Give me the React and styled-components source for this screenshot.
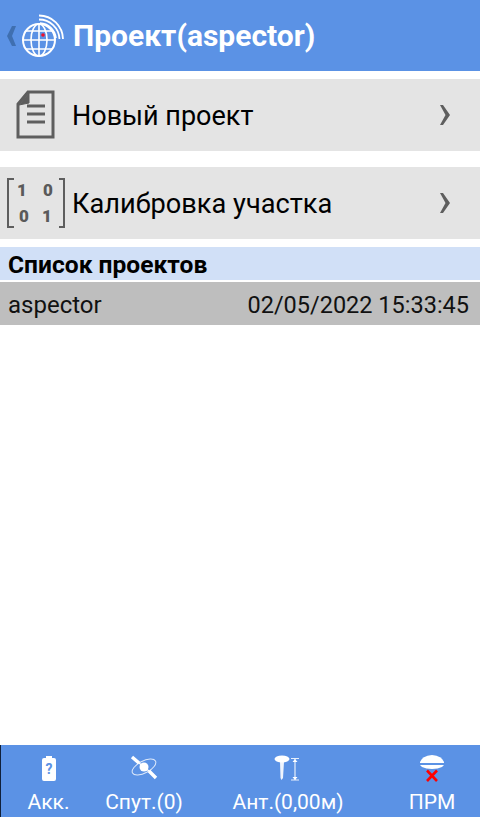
import React from "react";
import styled, { createGlobalStyle } from "styled-components";

const GlobalStyle = createGlobalStyle`
  html, body {
    margin: 0;
    padding: 0;
    background: #fff;
    font-family: Roboto, "Noto Sans", sans-serif;
  }
`;

const BackIcon = () => (
  <svg width="11" height="22" viewBox="0 0 11 22">
    <path d="M6 1 L1 11 L6 21 L10 21 L6 11 L10 1 Z" fill="#3f6fb0" />
  </svg>
);

const GlobeIcon = () => (
  <svg width="54" height="44" viewBox="0 0 54 44" fill="none" stroke="#fff">
    <circle cx="20" cy="26" r="16" strokeWidth="2" />
    <ellipse cx="20" cy="26" rx="8" ry="16" strokeWidth="1.6" />
    <path d="M20 10 V42 M4 26 H36 M7 17 H33 M7 35 H33" strokeWidth="1.6" />
    <path d="M21 9 A17 17 0 0 1 37 24" strokeWidth="1.6" />
    <path d="M20 5.500 A20.500 20.500 0 0 1 40.500 25" strokeWidth="1.8" />
    <path d="M20 1.500 A24 24 0 0 1 44 25" strokeWidth="1.8" />
    <circle cx="24" cy="21" r="1.800" fill="#f0102a" stroke="none" />
  </svg>
);

const DocIcon = () => (
  <svg width="40" height="50" viewBox="0 0 40 50" fill="none" stroke="#5e5e5e">
    <path d="M12 2 H37 V47 H2 V14 Z" strokeWidth="3" />
    <path d="M3 15 L13 13 L13 3 Z" fill="#5e5e5e" strokeWidth="1" />
    <path d="M11 16 H29 M11 24 H29 M11 32 H29" strokeWidth="3" />
  </svg>
);

const MatrixIcon = () => (
  <svg width="60" height="52" viewBox="0 0 60 52">
    <path d="M8 2 H2 V50 H8 M53 2 H58 V50 H53" fill="none" stroke="#5e5e5e" strokeWidth="2" />
    <g fill="#5a5a5a" fontFamily="Roboto, sans-serif" fontWeight="900" fontSize="17" textAnchor="middle">
      <text x="16" y="19">1</text>
      <text x="42" y="19">0</text>
      <text x="18" y="45">0</text>
      <text x="41" y="45">1</text>
    </g>
  </svg>
);

const Chevron = () => (
  <svg width="12" height="22" viewBox="0 0 12 22">
    <path d="M1 1 H4 L11 11 L4 21 H1 L6.500 11 Z" fill="#5e5e5e" />
  </svg>
);

const BatteryIcon = () => (
  <svg width="14" height="25" viewBox="0 0 14 25">
    <path d="M4 0 H10 V2 H12 Q14 2 14 4 V23 Q14 25 12 25 H2 Q0 25 0 23 V4 Q0 2 2 2 H4 Z" fill="#fff" />
    <text x="7" y="18" textAnchor="middle" fontFamily="Roboto, sans-serif" fontWeight="700" fontSize="14" fill="#5b92e5">?</text>
  </svg>
);

const SatelliteIcon = () => (
  <svg width="28" height="26" viewBox="0 0 28 26" fill="none" stroke="#fff">
    <path d="M2 2 L9 8 M19 16 L26 23" strokeWidth="3.400" />
    <path d="M9 8 L19 16" strokeWidth="1.400" />
    <ellipse cx="14" cy="12" rx="13" ry="6" transform="rotate(-28 14 12)" strokeWidth="1" opacity="0.8" />
    <circle cx="14" cy="12" r="4.500" fill="#fff" stroke="none" />
  </svg>
);

const AntennaIcon = () => (
  <svg width="28" height="26" viewBox="0 0 28 26">
    <ellipse cx="8" cy="4" rx="7.500" ry="3.500" fill="#fff" />
    <path d="M6 7 H10 L9 23 L7.500 25 L6.500 23 Z" fill="#fff" opacity="0.9" />
    <path d="M17 3.500 H25 M17 25 H25 M21 4 V25" stroke="#fff" strokeWidth="1.200" fill="none" opacity="0.85" />
    <path d="M18.500 7 L21 4 L23.500 7 Z M18.500 22 L21 25 L23.500 22 Z" fill="#fff" />
  </svg>
);

const ReceiverIcon = () => (
  <svg width="26" height="27" viewBox="0 0 26 27">
    <path d="M1 7 Q3 1 13 0 Q23 1 25 7 V8 H1 Z" fill="#fff" />
    <path d="M1 10 H25 L23 12 Q19 14 13 14 Q7 14 3 12 Z" fill="#fff" />
    <path d="M8 15.500 L18 26 M18 15.500 L8 26" stroke="#f00" strokeWidth="2.600" />
  </svg>
);

const rows = [
  { id: "new", icon: <DocIcon />, label: "Новый проект", size: 27 },
  { id: "calib", icon: <MatrixIcon />, label: "Калибровка участка", size: 27.2 },
];

const tabs = [
  { id: "bat", icon: <BatteryIcon />, label: "Акк.", width: 95 },
  { id: "sat", icon: <SatelliteIcon />, label: "Спут.(0)", width: 96 },
  { id: "ant", icon: <AntennaIcon />, label: "Ант.(0,00м)", width: 192 },
  { id: "rcv", icon: <ReceiverIcon />, label: "ПРМ", width: 96 },
];

export default function App() {
  return (
    <Page>
      <GlobalStyle />
      <Header>
        <BackIcon />
        <GlobeIcon />
        <Title>Проект(aspector)</Title>
      </Header>
      <Menu>
        {rows.map((row) => (
          <MenuRow key={row.id}>
            <MenuIcon>{row.icon}</MenuIcon>
            <MenuLabel $size={row.size}>{row.label}</MenuLabel>
            <Chevron />
          </MenuRow>
        ))}
      </Menu>
      <SectionTitle>Список проектов</SectionTitle>
      <ProjectRow>
        <ProjectName>aspector</ProjectName>
        <span>02/05/2022 15:33:45</span>
      </ProjectRow>
      <Spacer />
      <Footer>
        {tabs.map((tab) => (
          <Tab key={tab.id} $width={tab.width}>
            <TabIcon>{tab.icon}</TabIcon>
            <TabLabel>{tab.label}</TabLabel>
          </Tab>
        ))}
      </Footer>
    </Page>
  );
}

const Page = styled.div`
  width: 480px;
  height: 817px;
  display: flex;
  flex-direction: column;
  overflow: hidden;
  background: #fff;
`;

const Header = styled.div`
  height: 71px;
  flex: none;
  display: flex;
  align-items: center;
  gap: 2px;
  padding-left: 6px;
  background: #5b92e5;
`;

const Title = styled.div`
  margin-left: -2px;
  font-size: 30px;
  font-weight: 700;
  color: #fff;
  white-space: nowrap;
`;

const Menu = styled.div`
  flex: none;
  display: flex;
  flex-direction: column;
  gap: 16px;
  padding: 8px 0;
`;

const MenuRow = styled.div`
  height: 72px;
  display: flex;
  align-items: center;
  padding-right: 29px;
  background: #e4e4e4;
`;

const MenuIcon = styled.div`
  width: 72px;
  flex: none;
  display: flex;
  justify-content: center;
`;

const MenuLabel = styled.div`
  flex: 1;
  padding-top: 1px;
  font-size: ${(p) => p.$size}px;
  color: #000;
`;

const SectionTitle = styled.div`
  height: 33px;
  flex: none;
  display: flex;
  align-items: center;
  padding: 1px 0 0 8px;
  box-sizing: border-box;
  background: #d1e0f7;
  font-size: 24.6px;
  font-weight: 700;
  color: #000;
`;

const ProjectRow = styled.div`
  height: 43px;
  flex: none;
  display: flex;
  align-items: center;
  justify-content: space-between;
  box-sizing: border-box;
  margin-top: 2px;
  padding: 2px 11px 0 8px;
  background: #bebebe;
  font-size: 23.5px;
  color: #111;
`;

const ProjectName = styled.span`
  font-size: 24px;
`;

const Spacer = styled.div`
  flex: 1;
`;

const Footer = styled.div`
  height: 72px;
  flex: none;
  display: flex;
  background: #5b92e5;
  border-left: 1px solid #10203a;
`;

const Tab = styled.div`
  width: ${(p) => p.$width}px;
  display: flex;
  flex-direction: column;
  align-items: center;
`;

const TabIcon = styled.div`
  height: 44px;
  display: flex;
  align-items: center;
  padding-top: 4px;
  box-sizing: border-box;
`;

const TabLabel = styled.div`
  font-size: 21px;
  line-height: 30px;
  color: #fff;
  white-space: nowrap;
`;
